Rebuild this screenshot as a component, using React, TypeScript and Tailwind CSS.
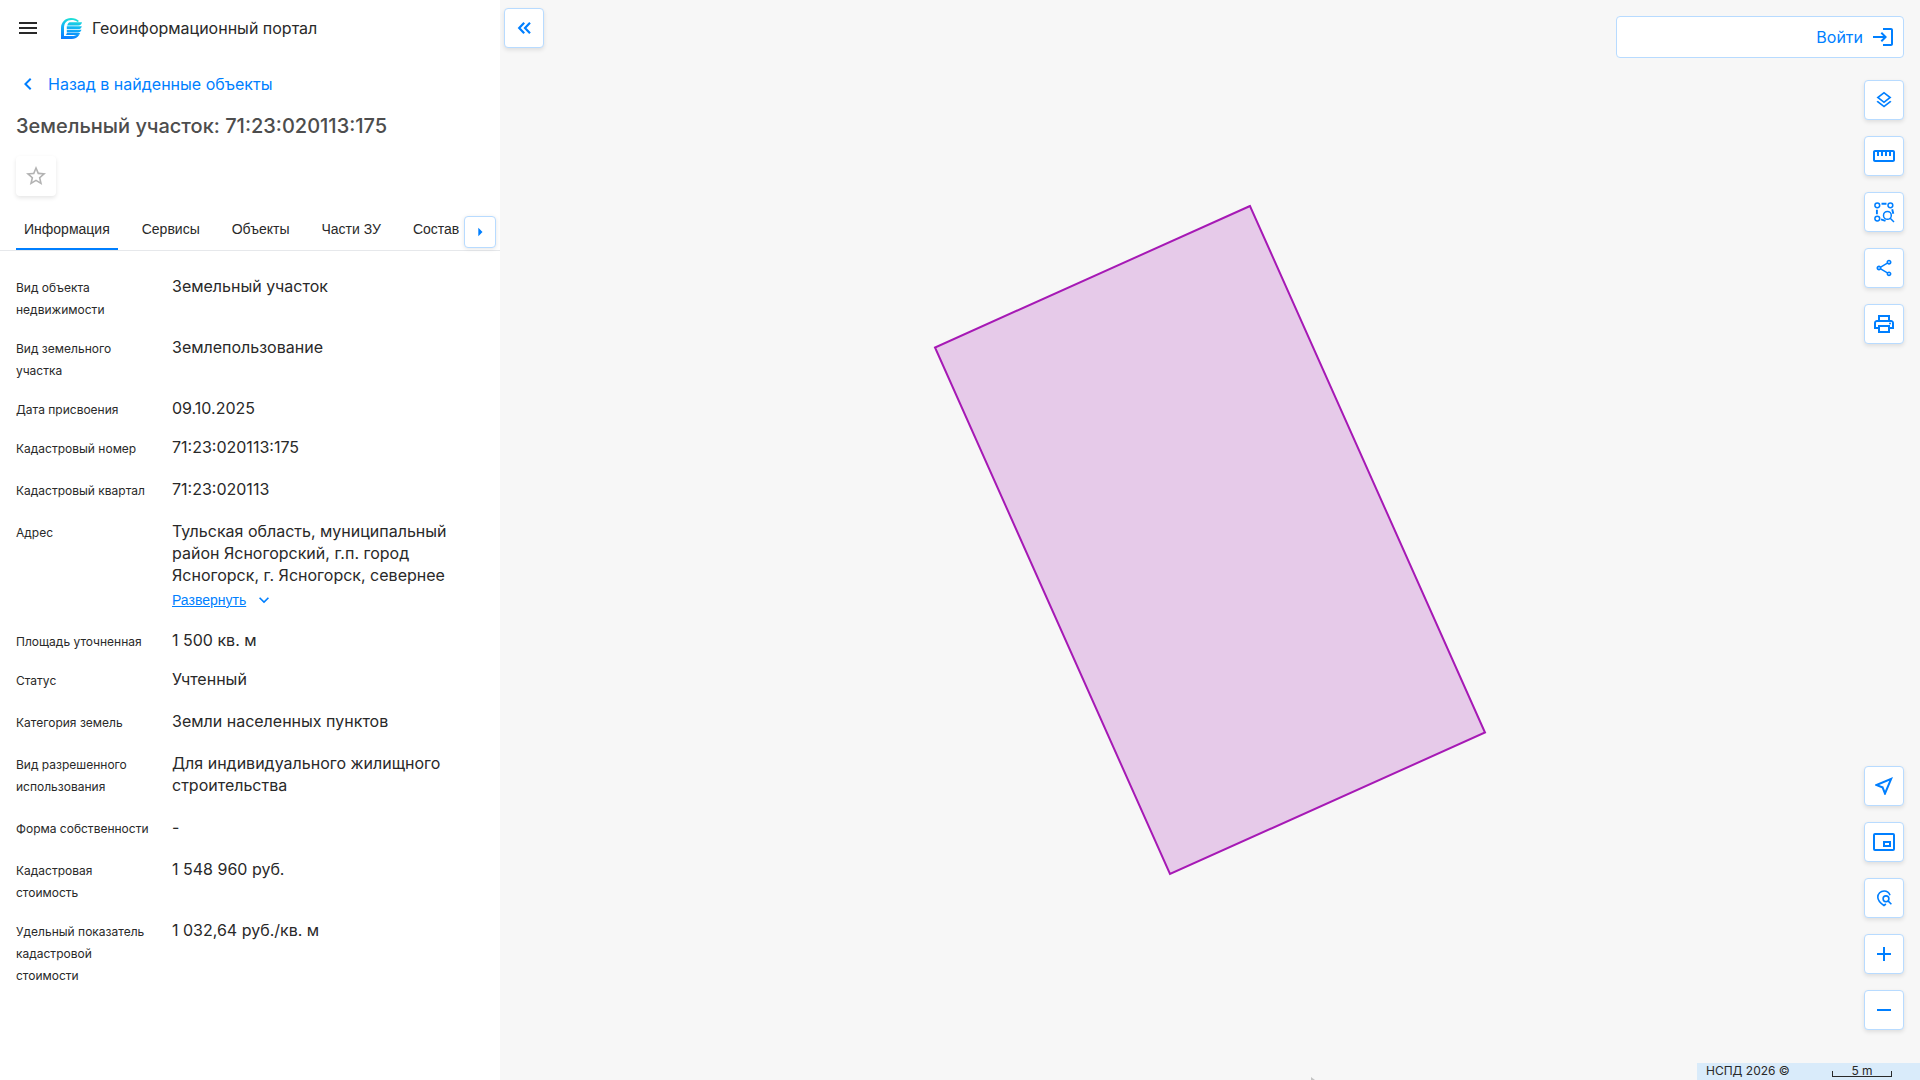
import { useState } from "react";
import type { ReactNode } from "react";
import {
  MdAdd,
  MdArrowRight,
  MdChevronLeft,
  MdKeyboardArrowDown,
  MdLogin,
  MdMenu,
  MdOutlineLayers,
  MdOutlineNearMe,
  MdOutlinePrint,
  MdOutlineShare,
  MdRemove,
  MdStarBorder,
  MdStraighten,
} from "react-icons/md";

interface Property {
  label: string;
  value: string;
  spacious?: boolean;
  expandable?: boolean;
}

const TABS = ["Информация", "Сервисы", "Объекты", "Части ЗУ", "Состав"];

const PROPERTIES: Property[] = [
  { label: "Вид объекта недвижимости", value: "Земельный участок" },
  { label: "Вид земельного участка", value: "Землепользование" },
  { label: "Дата присвоения", value: "09.10.2025" },
  { label: "Кадастровый номер", value: "71:23:020113:175", spacious: true },
  { label: "Кадастровый квартал", value: "71:23:020113", spacious: true },
  {
    label: "Адрес",
    value: "Тульская область, муниципальный район Ясногорский, г.п. город Ясногорск, г. Ясногорск, севернее",
    expandable: true,
  },
  { label: "Площадь уточненная", value: "1 500 кв. м" },
  { label: "Статус", value: "Учтенный", spacious: true },
  { label: "Категория земель", value: "Земли населенных пунктов", spacious: true },
  { label: "Вид разрешенного использования", value: "Для индивидуального жилищного строительства", spacious: true },
  { label: "Форма собственности", value: "-", spacious: true },
  { label: "Кадастровая стоимость", value: "1 548 960 руб." },
  { label: "Удельный показатель кадастровой стоимости", value: "1 032,64 руб./кв. м" },
];

function Logo() {
  return (
    <svg className="h-[21px] w-[21px]" viewBox="0 0 21 21" fill="none">
      <defs>
        <linearGradient id="logo" x1="12" y1="0" x2="8" y2="21" gradientUnits="userSpaceOnUse">
          <stop stopColor="#1fe3d3" />
          <stop offset="0.45" stopColor="#12b5f5" />
          <stop offset="1" stopColor="#0a7cff" />
        </linearGradient>
      </defs>
      <path
        d="M0 21V10C0 4 4.500 0 10 0c3.500 0 6 1 8 3l-1.500 1C14.800 2.600 12.800 2 10.500 2 5.700 2 3 5 3 10v8h8c2.300 0 4.300-.6 6-1.800h1.700C16.500 19.500 13.800 21 10.500 21z"
        fill="url(#logo)"
      />
      <path
        d="M8.500 4.200H21c-.3 2-1.500 3.200-3.500 3.200H6.200c.4-1.300 1.200-2.500 2.300-3.200zM5.800 8.200h15c-.4 1.900-1.600 2.900-3.500 2.900H5.800zM5.800 11.800h14.700c-.6 1.800-1.700 2.600-3.500 2.600H5.800zM5.800 15h13.400c-1 1.500-2 2.100-3.700 2.100h-11c.8-.4 1.200-1.200 1.300-2.100z"
        fill="url(#logo)"
      />
    </svg>
  );
}

function CollapseIcon() {
  return (
    <svg className="size-6" viewBox="0 0 24 24" fill="none" stroke="currentColor" strokeWidth="2.200">
      <path d="m12.200 6.800-5 5.200 5 5.200M18 6.800 13 12l5 5.200" />
    </svg>
  );
}

function AreaSearchIcon() {
  return (
    <svg className="size-6" viewBox="0 0 24 24" fill="none" stroke="currentColor" strokeWidth="1.5">
      <circle cx="5.300" cy="5.300" r="2.400" />
      <circle cx="18.400" cy="5.300" r="2.400" />
      <circle cx="5.300" cy="18.600" r="2.400" />
      <path d="M9.500 3.700h5M4.900 9.700v4.600M20.200 9.200l1.100 4.500M9 19.400l4.500 1.500" strokeWidth="1.900" />
      <circle cx="15.400" cy="15.400" r="3.900" />
      <path d="m18.200 18.200 3.800 3.800" />
    </svg>
  );
}

function PinSearchIcon() {
  return (
    <svg className="size-6" viewBox="0 0 24 24" fill="none" stroke="currentColor" strokeWidth="1.600">
      <path d="M18 9.300C17.200 6.800 14.900 5 12.100 5 8.600 5 5.800 7.700 5.800 11.200c0 2.900 2 5.400 6.200 8.300l1.900-1.500" />
      <circle cx="14" cy="12.800" r="2.900" />
      <path d="m16 14.900 3.400 3.300" />
    </svg>
  );
}

function MiniMapIcon() {
  return (
    <svg className="size-6" viewBox="0 0 24 24" fill="none" stroke="currentColor" strokeWidth="2">
      <rect x="2" y="4" width="20" height="16" rx="1" />
      <path d="M12 12h6v4h-6z" />
    </svg>
  );
}

function MapButton({ label, children }: { label: string; children: ReactNode }) {
  return (
    <button
      aria-label={label}
      className="flex size-10 items-center justify-center rounded-sm border border-[#b8dbff] bg-white text-[#007fff] shadow-[0_2px_4px_rgba(0,0,0,0.1)] hover:bg-[#f0f8ff]"
    >
      {children}
    </button>
  );
}

function PropertyRow({ item }: { item: Property }) {
  return (
    <div className={`grid grid-cols-[140px_1fr] items-baseline gap-4 ${item.spacious ? "pb-[18px]" : "pb-[15px]"}`}>
      <dt className="text-xs leading-[22px]">{item.label}</dt>
      <dd className="text-base leading-[22px]">
        {item.value}
        {item.expandable && (
          <button className="flex h-7 items-center gap-2 font-[Liberation_Sans] text-sm text-[#007fff]">
            <span className="underline">Развернуть</span>
            <MdKeyboardArrowDown className="size-5" />
          </button>
        )}
      </dd>
    </div>
  );
}

export default function App() {
  const [activeTab, setActiveTab] = useState(TABS[0]);

  return (
    <div className="flex h-screen overflow-hidden bg-[#f7f7f7] font-[Inter,sans-serif] text-[#292929] [font-optical-sizing:none]">
      <aside className="flex w-[500px] shrink-0 flex-col bg-white">
        <header className="flex h-14 items-center px-4">
          <button aria-label="Меню">
            <MdMenu className="size-6" />
          </button>
          <a href="#" className="ml-[21px] flex items-center gap-[10px]">
            <Logo />
            <span className="text-base">Геоинформационный портал</span>
          </a>
        </header>

        <a href="#" className="flex h-14 items-center gap-2 px-4 text-base text-[#007fff]">
          <MdChevronLeft className="size-6" />
          Назад в найденные объекты
        </a>

        <h1 className="px-4 text-xl leading-7 font-medium text-[#4d4d4d]">Земельный участок: 71:23:020113:175</h1>

        <div className="px-4 pt-4 pb-5">
          <button
            aria-label="В избранное"
            className="flex size-10 items-center justify-center rounded-sm bg-white text-[#b3b3b3] shadow-[0_2px_4px_rgba(0,0,0,0.1)]"
          >
            <MdStarBorder className="size-6" />
          </button>
        </div>

        <div className="flex h-[35px] border-b border-[#e6e8eb] pl-4">
          <div role="tablist" className="flex min-w-0 flex-1 gap-4 overflow-hidden">
            {TABS.map((tab) => (
              <button
                key={tab}
                role="tab"
                aria-selected={tab === activeTab}
                onClick={() => setActiveTab(tab)}
                className={`shrink-0 border-b-2 px-2 pb-1.5 font-[Liberation_Sans] text-sm ${
                  tab === activeTab ? "border-[#007fff]" : "border-transparent"
                }`}
              >
                {tab}
              </button>
            ))}
          </div>
          <button
            aria-label="Следующие вкладки"
            className="mr-1 flex size-8 items-center justify-center rounded-sm border border-[#b8dbff] bg-white text-[#007fff] shadow-[0_1px_4px_rgba(0,0,0,0.1)]"
          >
            <MdArrowRight className="size-5" />
          </button>
        </div>

        <dl className="flex-1 overflow-hidden px-4 pt-6">
          {PROPERTIES.map((item) => (
            <PropertyRow key={item.label} item={item} />
          ))}
        </dl>
      </aside>

      <main className="relative min-w-0 flex-1 overflow-hidden">
        <svg className="absolute inset-0 h-full w-full" viewBox="0 0 1420 1080">
          <path
            d="M750 206 435 347.500 670 874 985 732.500z"
            fill="#a619b5"
            fillOpacity="0.2"
            stroke="#a619b5"
            strokeWidth="2"
          />
          <path d="m811 1077 4 3h-4z" fill="#c4c4c4" />
        </svg>

        <div className="absolute top-2 left-1">
          <MapButton label="Свернуть панель">
            <CollapseIcon />
          </MapButton>
        </div>

        <div className="absolute top-4 right-4 flex flex-col items-end">
          <button className="mb-[22px] flex h-[42px] w-72 items-center justify-end gap-2 rounded-sm border border-[#b8dbff] bg-white px-2 text-base text-[#007fff]">
            Войти
            <MdLogin className="size-6" />
          </button>
          <div className="flex flex-col gap-4">
            <MapButton label="Слои">
              <MdOutlineLayers className="size-5" />
            </MapButton>
            <MapButton label="Измерения">
              <MdStraighten className="size-6" />
            </MapButton>
            <MapButton label="Поиск по области">
              <AreaSearchIcon />
            </MapButton>
            <MapButton label="Поделиться">
              <MdOutlineShare className="size-5" />
            </MapButton>
            <MapButton label="Печать">
              <MdOutlinePrint className="size-6" />
            </MapButton>
          </div>
        </div>

        <div className="absolute right-4 bottom-[50px] flex flex-col gap-4">
          <MapButton label="Моё местоположение">
            <MdOutlineNearMe className="size-6" />
          </MapButton>
          <MapButton label="Обзорная карта">
            <MiniMapIcon />
          </MapButton>
          <MapButton label="Поиск объекта">
            <PinSearchIcon />
          </MapButton>
          <MapButton label="Приблизить">
            <MdAdd className="size-6" />
          </MapButton>
          <MapButton label="Отдалить">
            <MdRemove className="size-6" />
          </MapButton>
        </div>

        <div className="absolute right-0 bottom-0 flex h-[17px] w-[223px] items-start justify-between bg-[#d9ebfa] pr-7 pl-[9px] text-xs leading-4">
          <span>НСПД 2026 ©</span>
          <div className="relative h-[14px] w-[60px] text-center">
            5 m
            <div className="absolute inset-x-0 bottom-0 h-[6px] border border-t-0 border-[#292929]" />
          </div>
        </div>
      </main>
    </div>
  );
}
